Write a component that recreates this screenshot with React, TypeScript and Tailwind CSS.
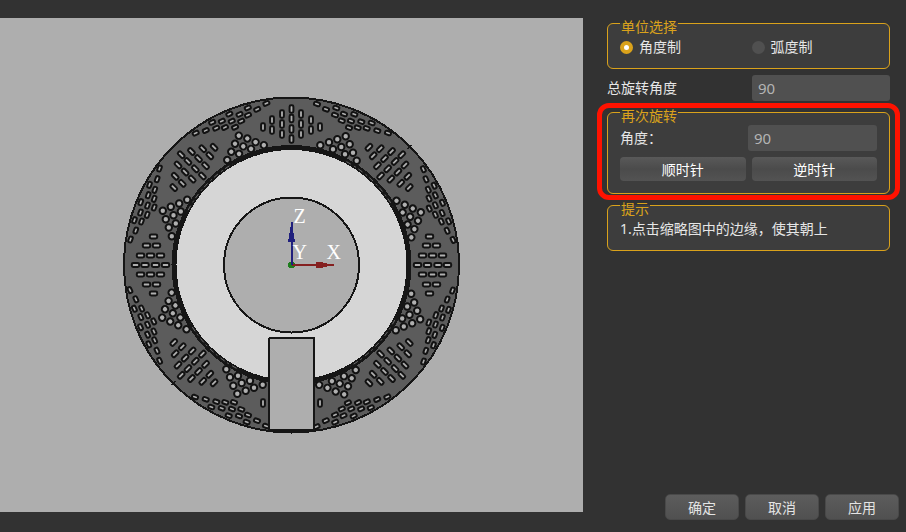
import { ReactNode, useState } from 'react';

type Unit = 'degree' | 'radian';

// hole centres of one 45° sector, relative to the axis of the part
const slots = [
  [0, -156], [0, -146.5], [0, -136], [0, -126],
  [-9.5, -151], [-9.5, -141], [-9.5, -131],
  [9.5, -151], [9.5, -141], [9.5, -131],
  [-19.5, -145], [-19.5, -135], [19.5, -145], [19.5, -135],
  [-28.5, -138], [28.5, -138],
];

const roundHoles = [
  [28.8, -119.7], [37.5, -122.7], [45.8, -125.7], [54.2, -128.7],
  [58.2, -120.7], [61.5, -112.3], [65.2, -104.3],
  [49.8, -118], [53.5, -110.7], [41.5, -115.7],
];

const edgeHoles = [
  [25.5, -161], [34.5, -155.7], [44.8, -157], [43.5, -150], [52.5, -151],
  [62.8, -150.7], [50.2, -144.3], [59.5, -144], [69.8, -143.3], [80.2, -142],
  [57.5, -137.3], [66.2, -137.3], [75.2, -136.7], [85.8, -134.3], [96.5, -132],
];

const sectors = [0, 45, 90, 135, 180, 225, 270, 315];

function Sector({ angle }: { angle: number }) {
  return (
    <g
      transform={`rotate(${angle})`}
      fill="#b0b0b0"
      stroke="#121212"
      strokeWidth={2}
      shapeRendering="geometricPrecision"
    >
      {slots.map(([x, y]) => (
        <rect key={`${x},${y}`} x={x - 1.9} y={y - 3.7} width={3.8} height={7.4} rx={1.4} />
      ))}
      {roundHoles.map(([x, y]) => (
        <circle key={`${x},${y}`} cx={x} cy={y} r={3.2} />
      ))}
      {edgeHoles.map(([x, y]) => (
        <rect
          key={`${x},${y}`}
          x={x - 3}
          y={y - 1.8}
          width={6}
          height={3.6}
          rx={1.5}
          transform={`rotate(20 ${x} ${y})`}
        />
      ))}
    </g>
  );
}

function Preview({ rotation }: { rotation: number }) {
  return (
    <svg
      viewBox="-291.5 -247 583 494"
      className="h-full w-full"
      shapeRendering="crispEdges"
      role="img"
      aria-label="缩略图"
    >
      <g transform={`rotate(${rotation})`}>
        <circle r={167.5} fill="#5c5c5c" stroke="#161616" strokeWidth={2} />
        {sectors.map((angle) => (
          <Sector key={angle} angle={angle} />
        ))}
        <path d="M115 -121 L120 -116 M116 -116 L120 -120 M-120 120 L-116 116" stroke="#161616" />
        <circle r={117.5} fill="#d6d6d6" stroke="#161616" strokeWidth={5} />
        {[28, 118, 208, 298].map((angle) => (
          <path
            key={angle}
            d="M0 -117 A117 117 0 0 1 62 -99.2"
            transform={`rotate(${angle})`}
            fill="none"
            stroke="#8a8a8a"
            strokeWidth={0.7}
            strokeDasharray="5 4 2 3"
            shapeRendering="geometricPrecision"
          />
        ))}
        <circle r={67.5} fill="#aeaeae" stroke="#161616" strokeWidth={2} />
        <rect x={-22.5} y={73} width={45} height={92} rx={1} fill="#aeaeae" stroke="#161616" strokeWidth={2} />
        <path d="M-22 165 H22 V167 H-22 Z" fill="#161616" />
      </g>

      {/* axes */}
      <circle r={3.5} fill="#1e7d1e" />
      <path d="M0 0 H42" stroke="#852020" strokeWidth={2} />
      <path d="M24 -3 H29 L38 -1 V1 L29 3 H24 Z" fill="#852020" />
      <path d="M0 0 V-24" stroke="#20207d" strokeWidth={2} />
      <path d="M-3.5 -23 L-1 -38 V-43 H1 V-38 L3.5 -23 Z" fill="#20207d" />
      <g fill="#ffffff" fontFamily="'Liberation Serif', serif" fontSize={20}>
        <text x={2} y={-42}>Z</text>
        <text x={1} y={-6}>Y</text>
        <text x={35} y={-6}>X</text>
      </g>
    </svg>
  );
}

function Group({ title, children }: { title: string; children: ReactNode }) {
  return (
    <fieldset className="min-w-0 rounded-md border border-[#daa21b] bg-[#3d3d3d] px-3">
      <legend className="h-[22px] px-px pt-2 leading-[14px] text-[#daa21b]">{title}</legend>
      {children}
    </fieldset>
  );
}

const inputClass =
  'h-[26px] min-w-0 rounded-[3px] bg-[#505050] px-1.5 text-[15px] text-[#b4b4b4] outline-none focus:ring-1 focus:ring-[#daa21b]';
const radioClass =
  'size-[13px] appearance-none rounded-full bg-[#505050] checked:border-4 checked:border-[#daa21b] checked:bg-white';
const turnClass =
  'h-6 rounded-[4px] bg-linear-to-b from-[#595959] via-[#4b4b4b] to-[#535353] pt-px text-white hover:brightness-110';
const footerClass =
  'h-[26px] w-[74px] rounded-[5px] border border-[#494949] bg-linear-to-b from-[#5c5c5c] to-[#505050] pt-px text-[#e4e4e4] hover:brightness-110';

export default function App() {
  const [unit, setUnit] = useState<Unit>('degree');
  const [total, setTotal] = useState('90');
  const [step, setStep] = useState('90');

  const turn = (direction: number) => {
    setTotal(String((Number(total) || 0) + direction * (Number(step) || 0)));
  };

  const factor = unit === 'degree' ? 1 : 180 / Math.PI;
  const rotation = ((Number(total) || 0) - 90) * factor;

  return (
    <div className="flex min-h-screen bg-[#323232] font-['Noto_Sans','Noto_Sans_CJK_SC',sans-serif] text-[14px] leading-5 text-[#e6e6e6]">
      <main className="mt-[18px] mb-5 min-w-0 flex-1 bg-[#aeaeae]">
        <Preview rotation={rotation} />
      </main>

      <aside className="flex w-[323px] shrink-0 flex-col py-3">
        <div className="flex flex-col pr-4 pl-6">
          <Group title="单位选择">
            <div className="grid h-[34px] grid-cols-2 gap-1.5 pb-2">
              <label className="flex items-center gap-1.5">
                <input
                  type="radio"
                  name="unit"
                  className={radioClass}
                  checked={unit === 'degree'}
                  onChange={() => setUnit('degree')}
                />
                角度制
              </label>
              <label className="flex items-center gap-1.5">
                <input
                  type="radio"
                  name="unit"
                  className={radioClass}
                  checked={unit === 'radian'}
                  onChange={() => setUnit('radian')}
                />
                弧度制
              </label>
            </div>
          </Group>

          <div className="flex items-center justify-between pt-1.5">
            <label htmlFor="total">总旋转角度</label>
            <input
              id="total"
              className={`${inputClass} w-[138px]`}
              value={total}
              onChange={(e) => setTotal(e.target.value)}
            />
          </div>

          <div className="relative">
            <Group title="再次旋转">
              <div className="flex items-center justify-between pt-0.5">
                <label htmlFor="step">角度：</label>
                <input
                  id="step"
                  className={`${inputClass} w-[129px]`}
                  value={step}
                  onChange={(e) => setStep(e.target.value)}
                />
              </div>
              <div className="grid grid-cols-2 gap-1.5 pt-1.5 pb-3">
                <button type="button" className={turnClass} onClick={() => turn(1)}>
                  顺时针
                </button>
                <button type="button" className={turnClass} onClick={() => turn(-1)}>
                  逆时针
                </button>
              </div>
            </Group>
            <div className="pointer-events-none absolute -inset-x-2.5 top-0.5 -bottom-1.5 rounded-xl border-5 border-[#ff1200]" />
          </div>

          <Group title="提示">
            <p className="h-[34px] pt-[3px]">1.点击缩略图中的边缘，使其朝上</p>
          </Group>
        </div>

        <div className="mt-auto flex justify-end gap-1.5 pr-[7px]">
          <button type="button" className={footerClass}>
            确定
          </button>
          <button type="button" className={footerClass}>
            取消
          </button>
          <button type="button" className={footerClass}>
            应用
          </button>
        </div>
      </aside>
    </div>
  );
}
